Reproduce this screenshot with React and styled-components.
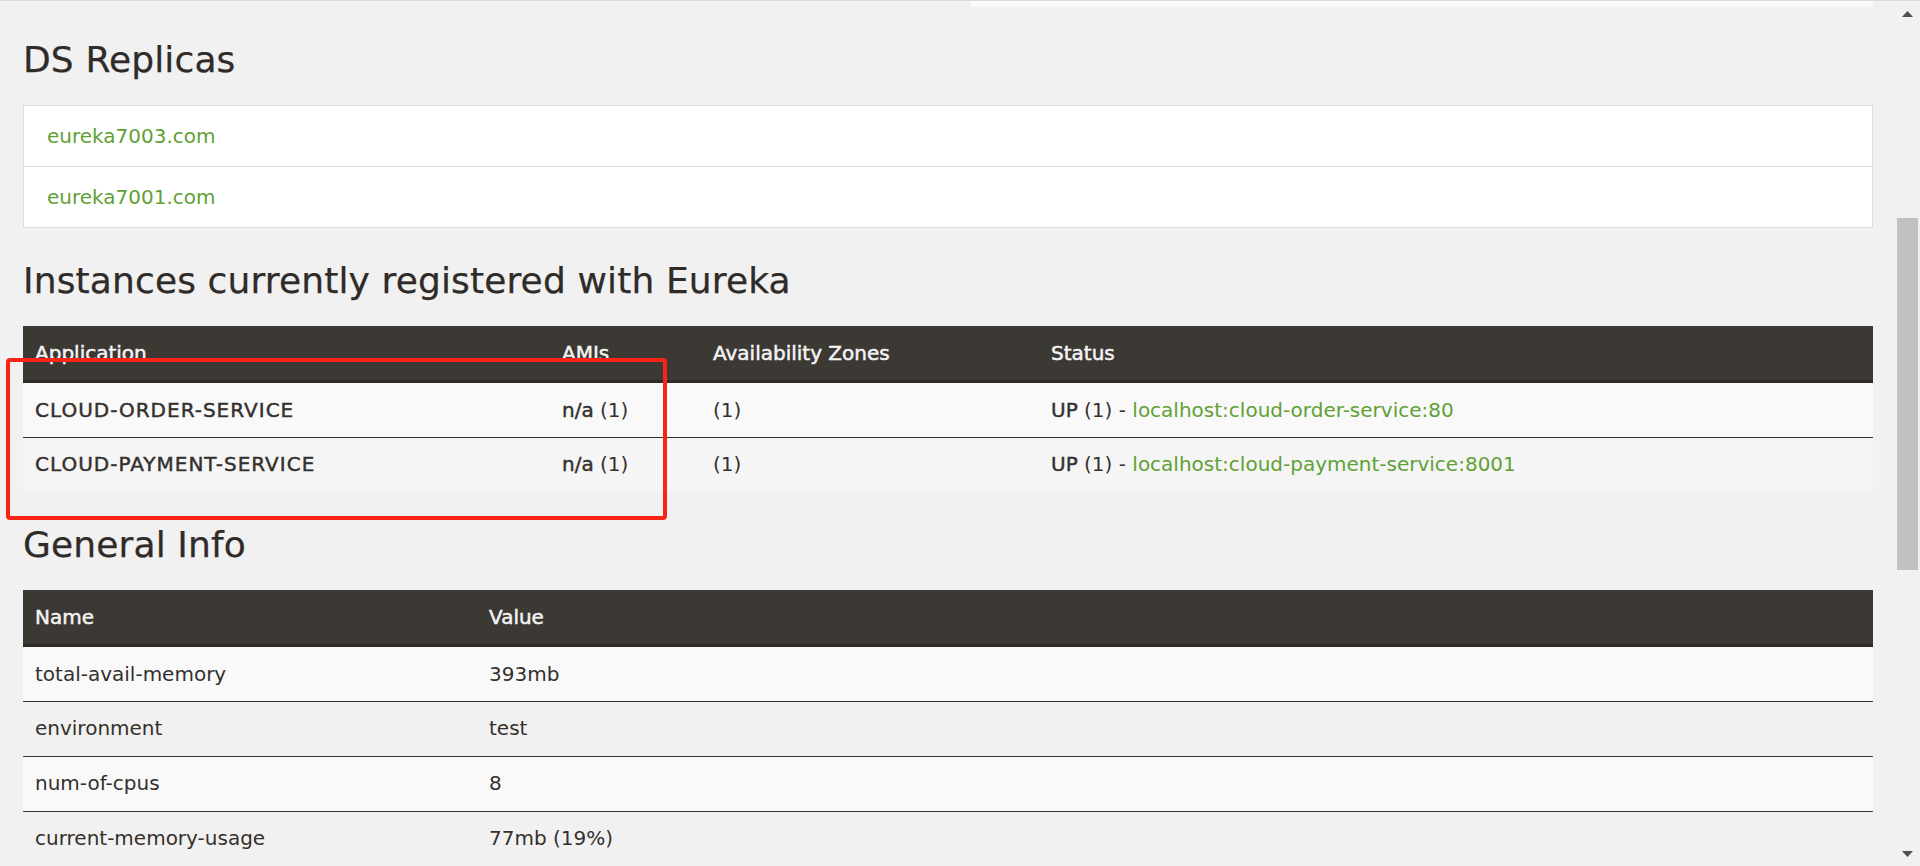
import React from 'react';
import styled, { createGlobalStyle } from 'styled-components';

const GlobalStyle = createGlobalStyle`
  *, *::before, *::after { box-sizing: border-box; }
  html, body { margin: 0; padding: 0; height: 100%; overflow: hidden; }
  body { background: #f1f1f1; font-family: "DejaVu Sans", "Liberation Sans", sans-serif; }
  #root { height: 100%; }
`;

const Frame = styled.div`
  position: relative;
  height: 100vh;
  display: flex;
  border-top: 1px solid #dcdcdc;
  background: #f1f1f1;
  overflow: hidden;
`;

const Page = styled.main`
  flex: 1;
  min-width: 0;
  padding: 0 22px 0 23px;
  overflow: hidden;
  color: #34302d;
  font-size: 20px;
  line-height: 30px;
`;

const TopRemnant = styled.div`
  display: grid;
  grid-template-columns: 1fr 1fr;
  column-gap: 45px;
`;

const RemnantStrip = styled.div`
  height: 6px;
  background: ${(p) => (p.$filled ? '#f9f9f9' : 'transparent')};
`;

const Heading = styled.h1`
  margin: 33px 0 25px;
  font-family: "DejaVu Sans", "Liberation Sans", sans-serif;
  font-size: 36px;
  font-weight: normal;
  letter-spacing: 0.13px;
  line-height: 40px;
  color: #2f2b28;
  -webkit-text-stroke: 0.25px #2f2b28;
`;

const ReplicaList = styled.div`
  border: 1px solid #dddddd;
  background: #ffffff;
`;

const ReplicaItem = styled.div`
  padding: 15px 23px;
  line-height: 30px;
  & + & { border-top: 1px solid #dddddd; }
`;

const Link = styled.a`
  color: #5fa134;
  text-decoration: none;
`;

const Table = styled.table`
  width: 100%;
  table-layout: fixed;
  border-collapse: separate;
  border-spacing: 0;
`;

const Th = styled.th`
  width: ${(p) => (p.$w ? `${p.$w}px` : 'auto')};
  padding: 12px 12px;
  background: #3c3834;
  color: #f4f4f4;
  text-align: left;
  font-weight: normal;
  -webkit-text-stroke: 0.5px #f4f4f4;
  line-height: 30px;
  border-bottom: 3px solid #2f2b28;
`;

const Tr = styled.tr`
  background: ${(p) => p.$bg || 'transparent'};
`;

const Td = styled.td`
  padding: 11px 12px 13px;
  line-height: 30px;
  border-top: 1px solid #34302d;
  white-space: nowrap;
  ${Tr}:first-child & {
    border-top: 0;
    padding: 12px 12px 12px;
  }
`;

const Strong = styled.b`
  font-weight: normal;
  letter-spacing: ${(p) => (p.$wide ? '1px' : '0')};
  -webkit-text-stroke: 0.45px #34302d;
`;

const Annotation = styled.div`
  position: absolute;
  left: 6px;
  top: 357px;
  width: 661px;
  height: 162px;
  border: 4px solid #fa2416;
  border-radius: 4px;
  pointer-events: none;
`;

const Scrollbar = styled.div`
  flex: none;
  width: 25px;
  display: flex;
  flex-direction: column;
  background: #f1f1f1;
`;

const ScrollArrow = styled.div`
  flex: none;
  height: 25px;
  display: flex;
  align-items: center;
  justify-content: center;
`;

const Track = styled.div`
  flex: 1;
  display: flex;
  flex-direction: column;
`;

const Thumb = styled.div`
  margin: 192px 2px 0;
  height: 352px;
  background: #c1c1c1;
`;

const Arrow = ({ down }) => (
  <svg width="11" height="6" viewBox="0 0 11 6">
    {down ? (
      <polygon points="0,0 11,0 5.5,6" fill="#505050" />
    ) : (
      <polygon points="5.5,0 11,6 0,6" fill="#505050" />
    )}
  </svg>
);

const replicas = ['eureka7003.com', 'eureka7001.com'];

const instances = [
  { app: 'CLOUD-ORDER-SERVICE', host: 'localhost:cloud-order-service:80', bg: '#f9f9f9' },
  { app: 'CLOUD-PAYMENT-SERVICE', host: 'localhost:cloud-payment-service:8001', bg: '#f5f5f5' },
];

const info = [
  ['total-avail-memory', '393mb'],
  ['environment', 'test'],
  ['num-of-cpus', '8'],
  ['current-memory-usage', '77mb (19%)'],
];

export default function App() {
  return (
    <>
      <GlobalStyle />
      <Frame>
        <Page>
          <TopRemnant>
            <RemnantStrip />
            <RemnantStrip $filled />
          </TopRemnant>

          <Heading>DS Replicas</Heading>
          <ReplicaList>
            {replicas.map((r) => (
              <ReplicaItem key={r}>
                <Link href="#">{r}</Link>
              </ReplicaItem>
            ))}
          </ReplicaList>

          <Heading>Instances currently registered with Eureka</Heading>
          <Table>
            <thead>
              <tr>
                <Th $w={527}>Application</Th>
                <Th $w={151}>AMIs</Th>
                <Th $w={338}>Availability Zones</Th>
                <Th>Status</Th>
              </tr>
            </thead>
            <tbody>
              {instances.map((i) => (
                <Tr key={i.app} $bg={i.bg}>
                  <Td><Strong $wide>{i.app}</Strong></Td>
                  <Td><Strong>n/a</Strong> (1)</Td>
                  <Td>(1)</Td>
                  <Td>
                    <Strong>UP</Strong> (1) - <Link href="#">{i.host}</Link>
                  </Td>
                </Tr>
              ))}
            </tbody>
          </Table>

          <Heading>General Info</Heading>
          <Table>
            <thead>
              <tr>
                <Th $w={454}>Name</Th>
                <Th>Value</Th>
              </tr>
            </thead>
            <tbody>
              {info.map(([k, v], idx) => (
                <Tr key={k} $bg={idx % 2 === 0 ? '#f9f9f9' : 'transparent'}>
                  <Td>{k}</Td>
                  <Td>{v}</Td>
                </Tr>
              ))}
            </tbody>
          </Table>
        </Page>

        <Scrollbar>
          <ScrollArrow><Arrow /></ScrollArrow>
          <Track><Thumb /></Track>
          <ScrollArrow><Arrow down /></ScrollArrow>
        </Scrollbar>

        <Annotation />
      </Frame>
    </>
  );
}
